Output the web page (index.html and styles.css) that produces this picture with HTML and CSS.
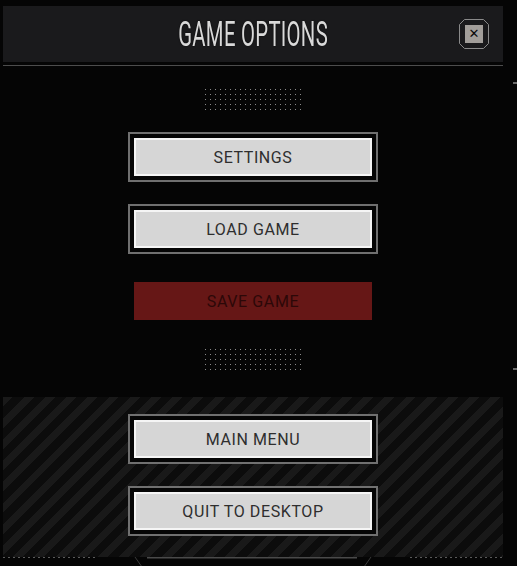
FILE: index.html
```html
<!DOCTYPE html>
<html>
<head>
<meta charset="utf-8">
<link rel="stylesheet" href="styles.css">
</head>
<body>
<div class="page">
  <main class="dialog">
    <header class="head">
      <span></span>
      <h1 class="title">GAME OPTIONS</h1>
      <div class="close-wrap">
        <button class="close" aria-label="Close">
          <svg width="30" height="30" viewBox="0 0 30 30"><polygon points="5.5,0.5 24.5,0.5 29.5,5.5 29.5,24.5 24.5,29.5 5.5,29.5 0.5,24.5 0.5,5.5" fill="none" stroke="#8a8a8a" stroke-width="1"/></svg>
          <span class="close-box">✕</span>
        </button>
      </div>
    </header>
    <div class="rule"></div>
    <div class="dots dots-top"></div>
    <div class="btn"><span class="btn-in">SETTINGS</span></div>
    <div class="btn"><span class="btn-in">LOAD GAME</span></div>
    <div class="btn btn-red"><span class="btn-in">SAVE GAME</span></div>
    <div class="dots dots-bottom"></div>
    <section class="panel">
      <div class="btn"><span class="btn-in">MAIN MENU</span></div>
      <div class="btn"><span class="btn-in">QUIT TO DESKTOP</span></div>
    </section>
    <svg class="foot" width="500" height="10" viewBox="0 0 500 10">
      <line x1="0" y1="0.5" x2="94" y2="0.5" stroke="#5a5a5a" stroke-width="1" stroke-dasharray="2 3"/>
      <line x1="144" y1="0.5" x2="354" y2="0.5" stroke="#4a4a4a" stroke-width="2"/>
      <line x1="132" y1="0" x2="139" y2="10" stroke="#3a3a3a" stroke-width="1"/>
      <line x1="368" y1="0" x2="361" y2="10" stroke="#3a3a3a" stroke-width="1"/>
      <line x1="407" y1="0.5" x2="500" y2="0.5" stroke="#5a5a5a" stroke-width="1" stroke-dasharray="2 3"/>
    </svg>
  </main>
  <aside class="side">
    <div class="tick tick-a"></div>
    <div class="tick tick-b"></div>
  </aside>
</div>
</body>
</html>
```

FILE: styles.css
```css
html, body {
  margin: 0;
  padding: 0;
  background: #050505;
  height: 566px;
  overflow: hidden;
}
.page {
  display: flex;
  padding-left: 3px;
}
.dialog {
  width: 500px;
  display: flex;
  flex-direction: column;
  align-items: center;
}
.head {
  margin-top: 6px;
  width: 500px;
  height: 56px;
  background: #1a1a1c;
  display: grid;
  grid-template-columns: 1fr auto 1fr;
  align-items: center;
}
.title {
  margin: 0;
  font-family: Roboto, "DejaVu Sans", sans-serif;
  font-weight: 400;
  font-size: 35px;
  line-height: 35px;
  color: #d9d9d9;
  letter-spacing: 0.5px;
  transform: scaleX(0.58);
  text-shadow: 0 0 2px rgba(0,0,0,0.8);
  white-space: nowrap;
}
.close-wrap {
  display: flex;
  justify-content: flex-end;
  padding-right: 14px;
}
.close {
  position: relative;
  width: 30px;
  height: 30px;
  padding: 0;
  border: 0;
  background: transparent;
  display: flex;
  align-items: center;
  justify-content: center;
}
.close svg {
  position: absolute;
  left: 0;
  top: 0;
}
.close-box {
  width: 18px;
  height: 18px;
  background: #a29e9a;
  color: #0a0a0a;
  font-family: "DejaVu Sans", sans-serif;
  font-size: 13px;
  font-weight: bold;
  line-height: 18px;
  text-align: center;
}
.rule {
  margin-top: 3px;
  width: 500px;
  height: 1px;
  background: #4d4d4d;
}
.dots {
  width: 96px;
  height: 21px;
  background: repeating-linear-gradient(90deg, #8a8a8a 0 1px, transparent 1px 5px);
  -webkit-mask-image: repeating-linear-gradient(180deg, #000 0 1px, transparent 1px 5px);
  mask-image: repeating-linear-gradient(180deg, #000 0 1px, transparent 1px 5px);
}
.dots-top { margin-top: 23px; }
.dots-bottom { margin-top: 23px; }
.btn {
  box-sizing: border-box;
  width: 250px;
  height: 50px;
  border: 2px solid #707070;
  padding: 4px;
  background: #050505;
  margin-top: 22px;
  display: flex;
}
.btn-in {
  box-sizing: border-box;
  flex: 1;
  background: #d6d6d6;
  border: 2px solid #f5f5f5;
  display: flex;
  align-items: center;
  justify-content: center;
  font-family: Roboto, "DejaVu Sans", sans-serif;
  font-size: 16px;
  font-weight: 400;
  letter-spacing: 0.6px;
  color: #2e2e2e;
}
.btn-red {
  border-color: transparent;
  background: transparent;
}
.btn-red .btn-in {
  background: #661716;
  border-color: #661716;
  color: #2c0808;
}
.panel {
  margin-top: 27px;
  box-sizing: border-box;
  width: 500px;
  height: 160px;
  padding-top: 17px;
  display: flex;
  flex-direction: column;
  align-items: center;
  gap: 22px;
  background: repeating-linear-gradient(135deg, #191919 0 7px, #0c0c0c 7px 15px);
}
.panel .btn { margin-top: 0; }
.foot {
  display: block;
}
.side {
  margin-left: 10px;
  width: 4px;
  display: flex;
  flex-direction: column;
}
.tick {
  width: 4px;
  height: 2px;
  background: #6a6a6a;
}
.tick-a { margin-top: 82px; }
.tick-b { margin-top: 284px; }
```
